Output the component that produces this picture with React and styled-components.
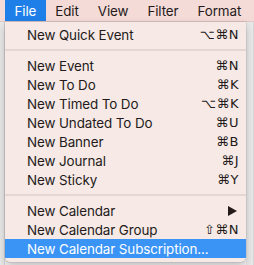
import React from "react";
import styled, { createGlobalStyle } from "styled-components";

const GlobalStyle = createGlobalStyle`
    body {
        margin: 0;
        background: #ededed;
    }
`;

const Screen = styled.div`
    position: relative;
    width: 254px;
    height: 265px;
    overflow: hidden;
    background: #eeeeee;
    font-family: "Inter", "DejaVu Sans", sans-serif;
    -webkit-font-smoothing: antialiased;
`;

const MenuBar = styled.div`
    display: flex;
    height: 22px;
    padding-left: 5px;
    background: #f4dbd8;
    border-bottom: 1px solid #e2c9c6;
    box-sizing: border-box;
`;

const MenuTitle = styled.div`
    display: flex;
    align-items: center;
    padding: 0 9.5px;
    font-size: 13.4px;
    letter-spacing: -0.1px;
    color: ${(p) => (p.active ? "#ffffff" : "#241a19")};
    background: ${(p) => (p.active ? "#1f7fe9" : "transparent")};
`;

const Backdrop = styled.div`
    display: grid;
    grid-template-columns: 5px 1fr 8px;
    height: 243px;
    background: #f3f3f3;
`;

const Gutter = styled.div`
    background: #e9e9e9;
    border-right: 1px solid #d8d8d8;
`;

const Dropdown = styled.div`
    position: absolute;
    left: 5px;
    top: 22px;
    width: 241px;
    padding: 3px 0 4px;
    background: #f6e9e6;
    border-radius: 0 0 5px 5px;
    box-shadow: 0 0 0 0.5px rgba(0, 0, 0, 0.12), 0 4px 10px rgba(0, 0, 0, 0.22);
`;

const Item = styled.div`
    display: grid;
    grid-template-columns: 1fr auto;
    align-items: center;
    height: 19px;
    padding: 0 7px 0 22px;
    font-size: 13.4px;
    letter-spacing: -0.1px;
    color: ${(p) => (p.active ? "#ffffff" : "#241a19")};
    background: ${(p) => (p.active ? "#3a94f6" : "transparent")};
`;

const Shortcut = styled.span`
    font-family: "DejaVu Sans", sans-serif;
    font-size: 13px;
    letter-spacing: 0.5px;
`;

const Arrow = styled.span`
    width: 0;
    height: 0;
    margin-right: 2px;
    border-top: 5px solid transparent;
    border-bottom: 5px solid transparent;
    border-left: 9px solid #241a19;
`;

const Separator = styled.div`
    height: 2px;
    margin: 5px 0;
    background: #e3d6d3;
`;

const groups = [
    [["New Quick Event", "⌥⌘N"]],
    [
        ["New Event", "⌘N"],
        ["New To Do", "⌘K"],
        ["New Timed To Do", "⌥⌘K"],
        ["New Undated To Do", "⌘U"],
        ["New Banner", "⌘B"],
        ["New Journal", "⌘J"],
        ["New Sticky", "⌘Y"],
    ],
    [
        ["New Calendar", "arrow"],
        ["New Calendar Group", "⇧⌘N"],
        ["New Calendar Subscription...", "", true],
    ],
];

export default function App() {
    return (
        <Screen>
            <GlobalStyle />
            <MenuBar>
                <MenuTitle active>File</MenuTitle>
                <MenuTitle>Edit</MenuTitle>
                <MenuTitle>View</MenuTitle>
                <MenuTitle>Filter</MenuTitle>
                <MenuTitle>Format</MenuTitle>
            </MenuBar>
            <Backdrop>
                <Gutter />
                <div />
                <Gutter />
            </Backdrop>
            <Dropdown>
                {groups.map((group, gi) => (
                    <React.Fragment key={gi}>
                        {gi > 0 && <Separator />}
                        {group.map(([label, key, active]) => (
                            <Item key={label} active={active}>
                                <span>{label}</span>
                                {key === "arrow" ? <Arrow /> : <Shortcut>{key}</Shortcut>}
                            </Item>
                        ))}
                    </React.Fragment>
                ))}
            </Dropdown>
        </Screen>
    );
}
